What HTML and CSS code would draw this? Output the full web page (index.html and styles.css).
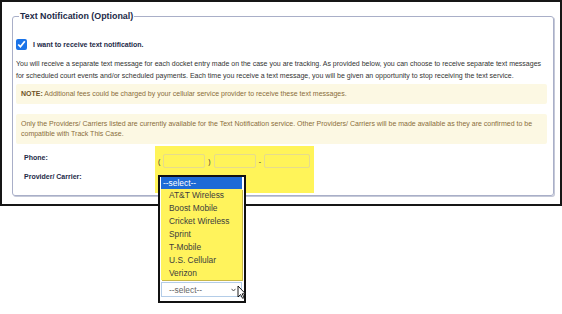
FILE: index.html
```html
<!DOCTYPE html>
<html lang="en">
<head>
    <meta charset="UTF-8">
    <meta name="viewport" content="width=device-width, initial-scale=1.0">
    <title>Text Notification</title>
    <link rel="stylesheet" href="styles.css">
</head>
<body>
    <div class="frame">
        <fieldset class="notify">
            <legend>Text Notification (Optional)</legend>

            <label class="opt-in">
                <input type="checkbox" checked>
                <span>I want to receive text notification.</span>
            </label>

            <p class="intro">You will receive a separate text message for each docket entry made on the case you are tracking. As provided below, you can choose to receive separate text messages for scheduled court events and/or scheduled payments. Each time you receive a text message, you will be given an opportunity to stop receiving the text service.</p>

            <div class="alert"><strong>NOTE:</strong> Additional fees could be charged by your cellular service provider to receive these text messages.</div>

            <div class="alert">Only the Providers/ Carriers listed are currently available for the Text Notification service. Other Providers/ Carriers will be made available as they are confirmed to be compatible with Track This Case.</div>

            <div class="contact">
                <div class="labels">
                    <span>Phone:</span>
                    <span>Provider/ Carrier:</span>
                </div>
                <div class="highlight">
                    <div class="phone">
                        <span>(</span>
                        <input type="text" class="area">
                        <span>)</span>
                        <input type="text" class="prefix">
                        <span>-</span>
                        <input type="text" class="line">
                    </div>
                </div>
            </div>
        </fieldset>
    </div>

    <!-- open carrier list -->
    <div class="dropdown">
        <div class="selected">--select--</div>
        <ul class="options">
            <li>AT&amp;T Wireless</li>
            <li>Boost Mobile</li>
            <li>Cricket Wireless</li>
            <li>Sprint</li>
            <li>T-Mobile</li>
            <li>U.S. Cellular</li>
            <li>Verizon</li>
        </ul>
        <div class="select-box">
            <span>--select--</span>
            <svg class="chevron" width="5" height="4" viewBox="0 0 5 4"><path d="M.5 .8L2.5 3 4.5 .8" fill="none" stroke="#555" stroke-width="1"/></svg>
        </div>
        <svg class="cursor" width="9" height="14" viewBox="0 0 9 14"><path d="M1 1v11l2.6-2.5 2 3.8 1.6-.8-2-3.7H8.5z" fill="#fff" stroke="#000" stroke-width="0.9" stroke-linejoin="round"/></svg>
    </div>
</body>
</html>
```

FILE: styles.css
```css
body {
    margin: 0;
    font-family: "Liberation Sans", Arial, sans-serif;
    color: #333;
    background: #fff;
}
.frame {
    width: 562px;
    height: 206px;
    box-sizing: border-box;
    border: 2px solid #161616;
    padding: 9px 6px 8px 10px;
}
.notify {
    margin: 0;
    padding: 0 6px 2px 3px;
    border: 1px solid #a9afc8;
    border-radius: 3px;
    box-shadow: 1px 1px 0 #c5c9d8;
    height: 185px;
    box-sizing: border-box;
}
.notify legend {
    margin-left: 3px;
    padding: 0 1px;
    font-size: 8.9px;
    font-weight: bold;
    color: #1d2a48;
    line-height: 10px;
}
.opt-in {
    display: flex;
    align-items: center;
    gap: 6px;
    margin-top: 18px;
    font-size: 7px;
    font-weight: bold;
    color: #1d2a48;
}
.opt-in input {
    width: 11px;
    height: 11px;
    margin: 0;
    accent-color: #1a73e8;
}
.intro {
    margin: 8px 0 2px;
    font-size: 7px;
    line-height: 12px;
}
.alert {
    margin-bottom: 10px;
    padding: 5px 5px;
    background: #fcf8e3;
    border-radius: 2px;
    color: #8a6d3b;
    font-size: 7px;
    line-height: 10px;
}
.alert strong {
    color: #6e5327;
}
.contact {
    display: flex;
    margin-top: -8px;
}
.labels {
    width: 131px;
    padding: 8px 0 0 8px;
    display: flex;
    flex-direction: column;
    gap: 12px;
    font-size: 7px;
    font-weight: bold;
    color: #1d2a48;
}
.highlight {
    width: 159px;
    height: 47px;
    box-sizing: border-box;
    padding: 8px 4px 0 3px;
    background: #fff459;
}
.phone {
    display: flex;
    align-items: center;
    gap: 3px;
    font-size: 7px;
    color: #333;
}
.phone input {
    height: 14px;
    box-sizing: border-box;
    margin: 0;
    border: 1px solid #e6dc8c;
    border-radius: 2px;
    background: transparent;
}
.phone .area { width: 42px; }
.phone .prefix { width: 42px; }
.phone .line { width: 46px; }

.dropdown {
    position: absolute;
    left: 158px;
    top: 175px;
    width: 88px;
    height: 128px;
    box-sizing: border-box;
    border: 2px solid #111;
    background: #fff;
    padding: 0 2px 0 1px;
    font-size: 8.4px;
}
.selected {
    height: 12px;
    line-height: 12px;
    padding-left: 2px;
    background: #1d6ad6;
    color: #fff;
}
.options {
    list-style: none;
    margin: 0;
    padding: 0;
    background: #fff35c;
    box-shadow: 1px 1px 0 #c8b84a;
}
.options li {
    height: 13px;
    line-height: 13px;
    padding-left: 8px;
    color: #3d3d3d;
}
.select-box {
    position: relative;
    margin-top: 2px;
    height: 15px;
    box-sizing: border-box;
    border: 1px solid #b4cde8;
    display: flex;
    align-items: center;
    justify-content: space-between;
    padding: 0 5px 0 7px;
    color: #666;
}
.cursor {
    position: absolute;
    left: 77px;
    top: 108px;
}
```
